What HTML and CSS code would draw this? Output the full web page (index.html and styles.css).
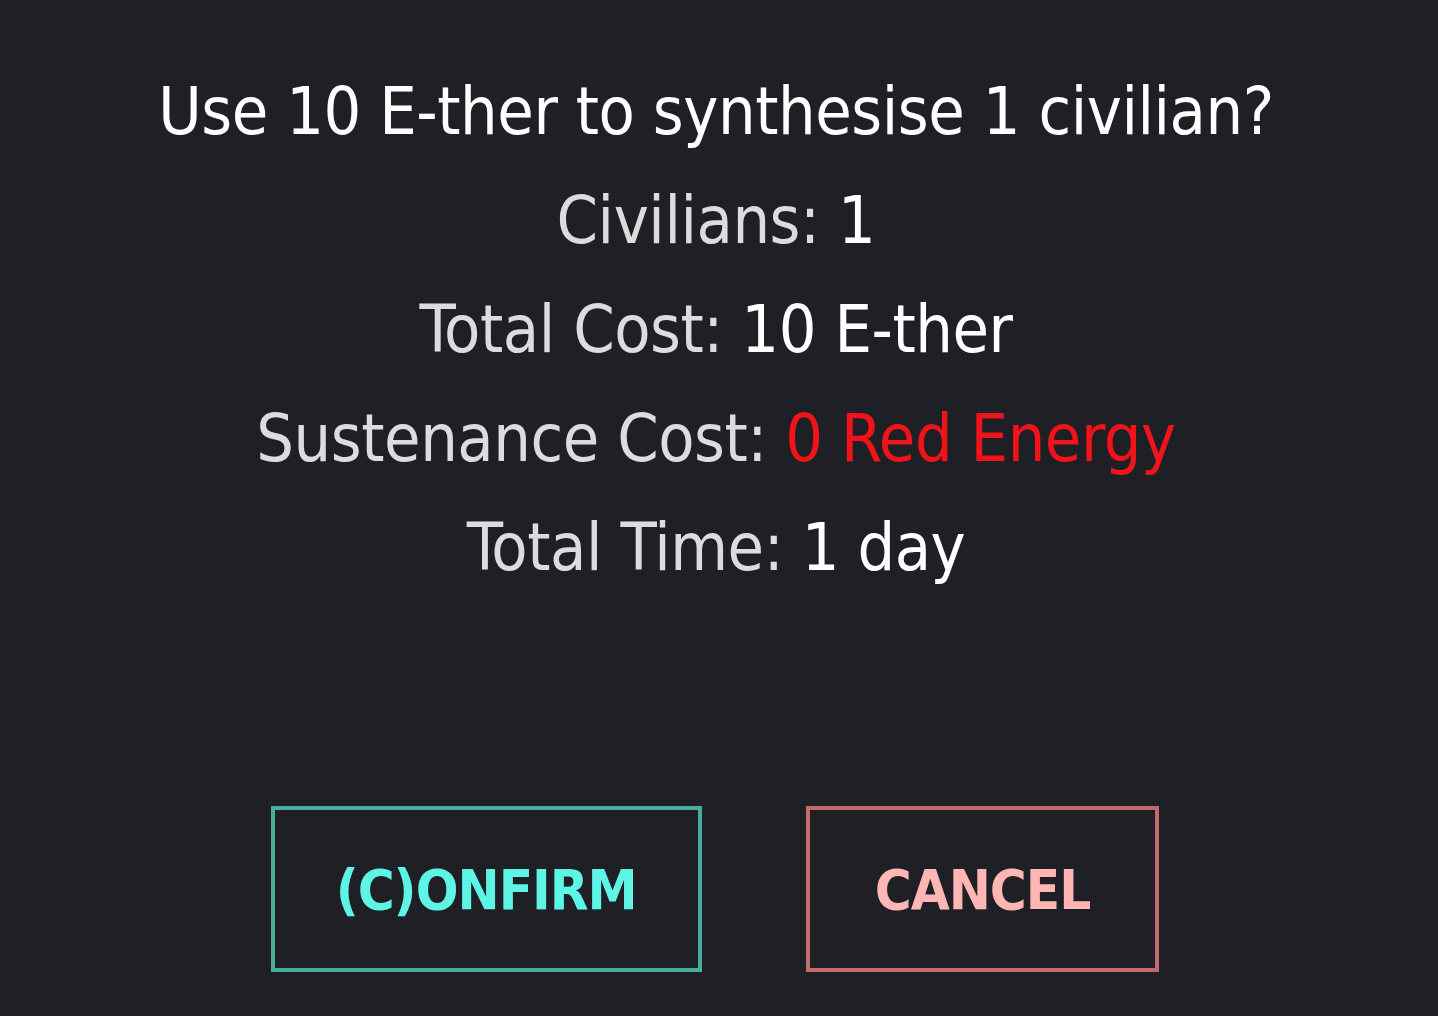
FILE: index.html
```html
<!DOCTYPE html>
<html lang="en">
<head>
    <meta charset="UTF-8">
    <meta name="viewport" content="width=device-width, initial-scale=1.0">
    <title>Synthesise Civilian</title>
    <link rel="stylesheet" href="styles.css">
</head>
<body>
    <div class="dialog">
        <div class="info">
            <p class="question">Use 10 E-ther to synthesise 1 civilian?</p>
            <p class="row">Civilians: <span class="value">1</span></p>
            <p class="row">Total Cost: <span class="value">10 E-ther</span></p>
            <p class="row">Sustenance Cost: <span class="value red">0 Red Energy</span></p>
            <p class="row">Total Time: <span class="value">1 day</span></p>
        </div>
        <div class="btn-container">
            <button class="btn btn-confirm">(C)ONFIRM</button>
            <button class="btn btn-cancel">CANCEL</button>
        </div>
    </div>
</body>
</html>
```

FILE: styles.css
```css
body {
    margin: 0;
    background-color: #1f2026;
    font-family: 'DejaVu Sans Condensed', 'DejaVu Sans', 'Noto Sans', sans-serif;
    font-stretch: condensed;
    color: #ffffff;
}
.dialog {
    height: 1016px;
    display: flex;
    flex-direction: column;
    align-items: center;
}
.info {
    padding-top: 57px;
    padding-right: 6px;
    text-align: center;
}
.info p {
    margin: 0;
    font-size: 66px;
    line-height: 109px;
    letter-spacing: -0.45px;
}
.row {
    color: #dcdcdc;
}
.value {
    color: #ffffff;
}
.red {
    color: #f2121a;
}
.btn-container {
    display: flex;
    gap: 104px;
    margin-top: 204px;
    margin-right: 8px;
}
.btn {
    background: transparent;
    font-family: inherit;
    font-size: 56px;
    font-weight: bold;
    letter-spacing: -1px;
    height: 166px;
    border: 4px solid;
    cursor: pointer;
}
.btn-confirm {
    padding: 0 61px;
    color: #5ff5e6;
    border-color: #47ad9c;
}
.btn-cancel {
    padding: 0 65px;
    color: #ffb6b4;
    border-color: #c36a6c;
}
```
